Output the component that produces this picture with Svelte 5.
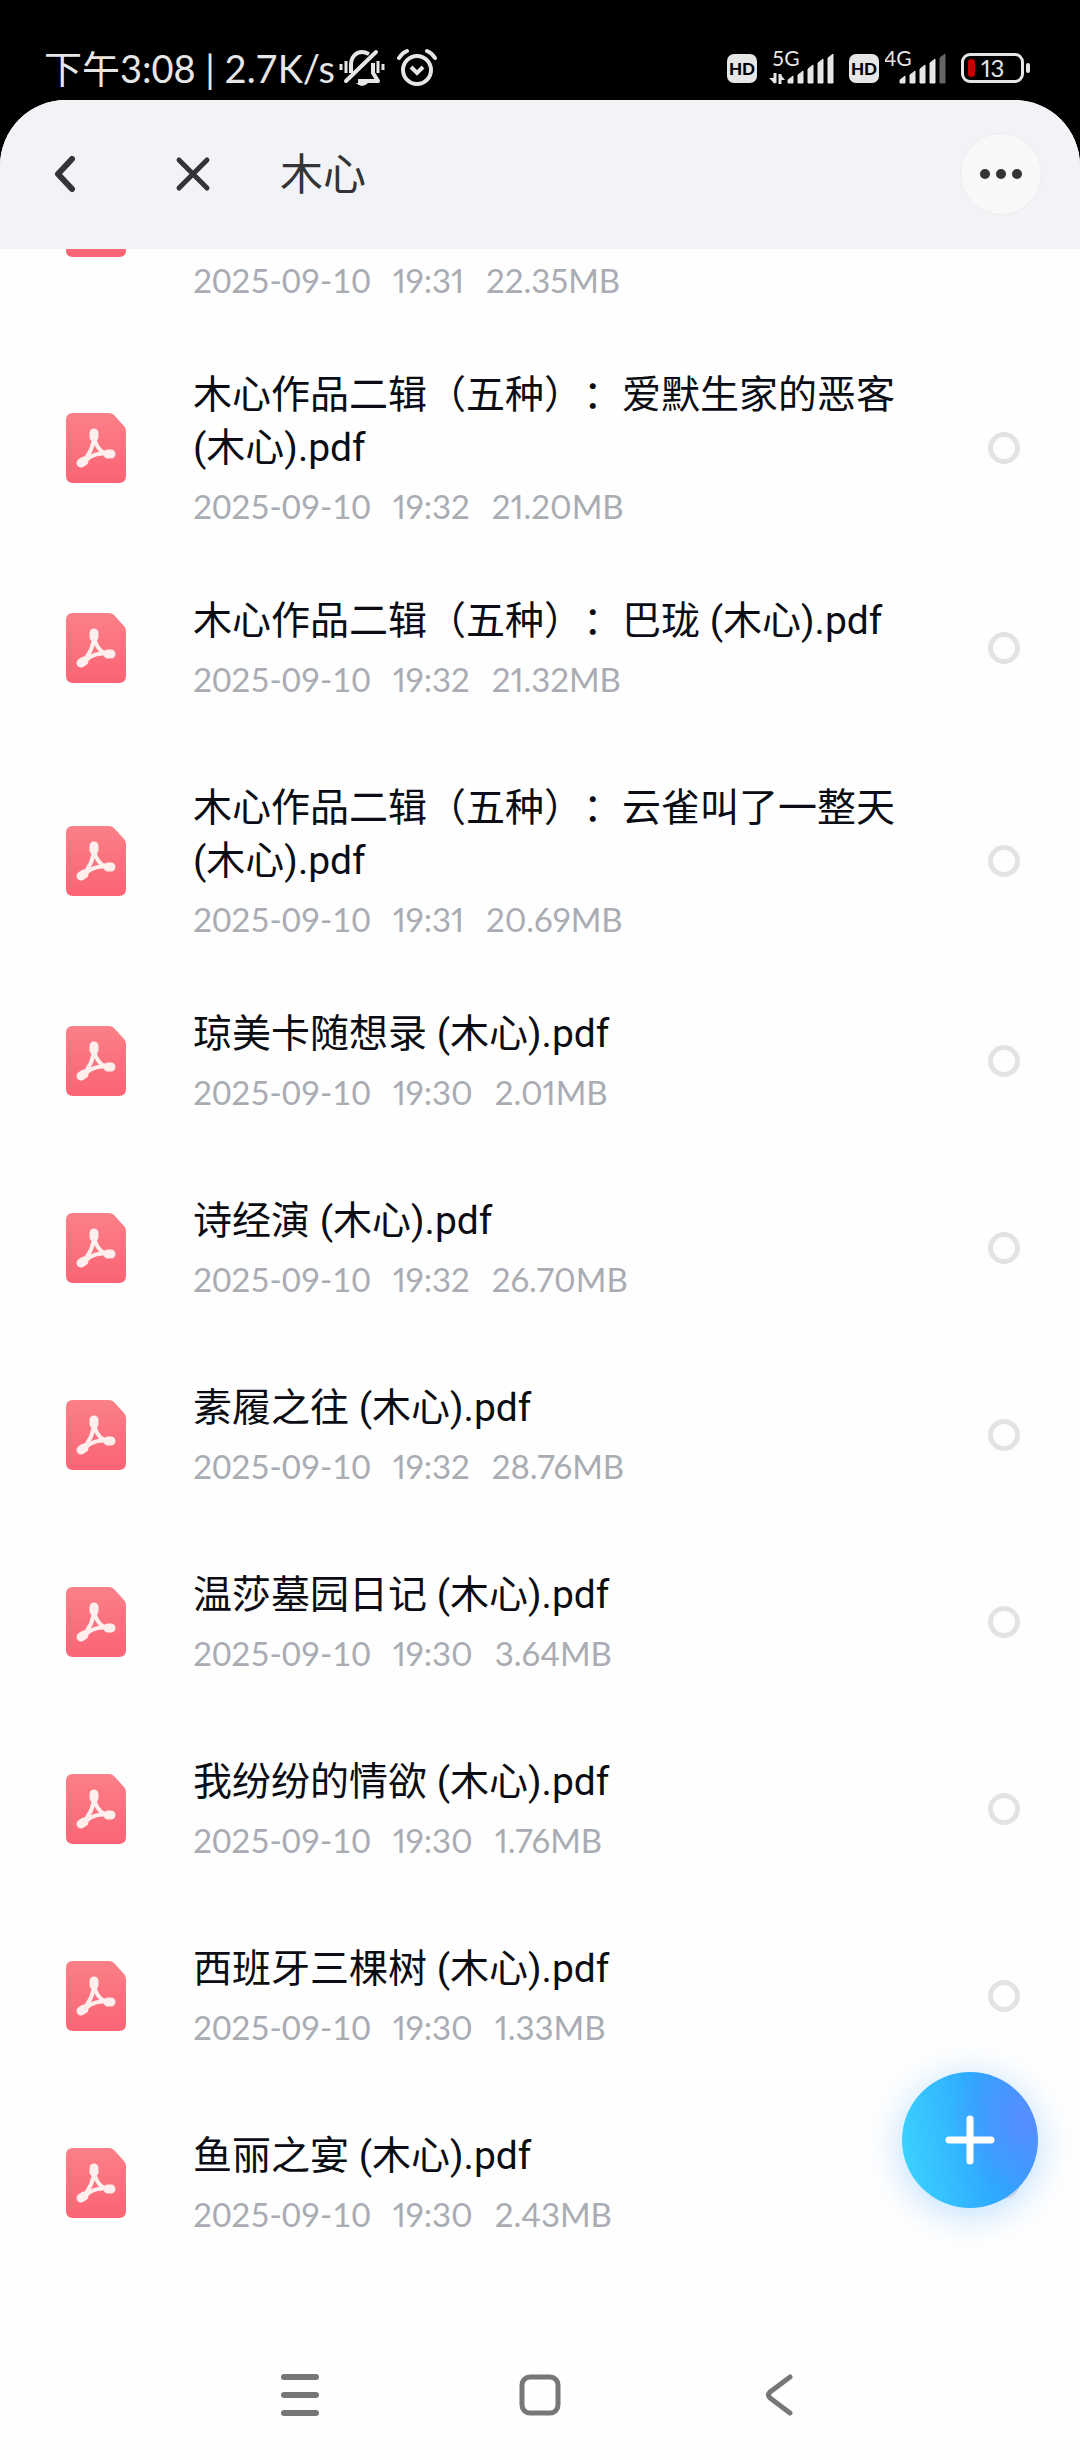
<script>
  /**
   * Files of the open folder. The first one is scrolled halfway under the
   * header, so only its meta line is left on screen.
   */
  const files = $state([
    { name: '', date: '2025-09-10', time: '19:31', size: '22.35MB', checked: false },
    { name: '木心作品二辑（五种）：爱默生家的恶客 (木心).pdf', date: '2025-09-10', time: '19:32', size: '21.20MB', checked: false },
    { name: '木心作品二辑（五种）：巴珑 (木心).pdf', date: '2025-09-10', time: '19:32', size: '21.32MB', checked: false },
    { name: '木心作品二辑（五种）：云雀叫了一整天 (木心).pdf', date: '2025-09-10', time: '19:31', size: '20.69MB', checked: false },
    { name: '琼美卡随想录 (木心).pdf', date: '2025-09-10', time: '19:30', size: '2.01MB', checked: false },
    { name: '诗经演 (木心).pdf', date: '2025-09-10', time: '19:32', size: '26.70MB', checked: false },
    { name: '素履之往 (木心).pdf', date: '2025-09-10', time: '19:32', size: '28.76MB', checked: false },
    { name: '温莎墓园日记 (木心).pdf', date: '2025-09-10', time: '19:30', size: '3.64MB', checked: false },
    { name: '我纷纷的情欲 (木心).pdf', date: '2025-09-10', time: '19:30', size: '1.76MB', checked: false },
    { name: '西班牙三棵树 (木心).pdf', date: '2025-09-10', time: '19:30', size: '1.33MB', checked: false },
    { name: '鱼丽之宴 (木心).pdf', date: '2025-09-10', time: '19:30', size: '2.43MB', checked: false }
  ]);
</script>

<!-- level: number of lit bars out of five -->
{#snippet sim(label, level, arrows)}
  <span class="sim">
    <span class="hd">HD</span>
    <svg
      width={arrows ? 74 : 64}
      height="48"
      viewBox={arrows ? '-4 -6 74 48' : '6 -6 64 48'}
      aria-hidden="true"
    >
      <text x="5" y="16" font-size="21" fill="#e6e6e6">{label}</text>
      {#if arrows}
        <path d="M8 23v10M13 34V24" fill="none" stroke="#e6e6e6" stroke-width="3" />
        <path d="M2 28h6v6zM13 24v6h5z" fill="#e6e6e6" />
      {/if}
      {#each [7, 12, 18, 24, 29] as height, i}
        <path
          d={`M${21 + i * 10} 33v${-(height - 4)}l5 -4v${height}z`}
          fill={i < level ? '#e6e6e6' : '#666'}
          stroke={i < level ? '#e6e6e6' : '#666'}
          stroke-linejoin="round"
        />
      {/each}
    </svg>
  </span>
{/snippet}

{#snippet pdfIcon()}
  <svg class="pdf-icon" width="60" height="70" viewBox="0 0 60 70" aria-hidden="true">
    <defs>
      <linearGradient id="pdf-fill" x1="0" y1="0" x2="0" y2="1">
        <stop offset="0" stop-color="#fa8088" />
        <stop offset="1" stop-color="#fb6475" />
      </linearGradient>
    </defs>
    <path d="M7 0h36q3 0 5 2l10 11q2 2 2 5v45q0 7-7 7H7q-7 0-7-7V7q0-7 7-7z" fill="url(#pdf-fill)" />
    <g fill="none" stroke="#feeeec" stroke-linecap="round" stroke-linejoin="round">
      <path d="M28 21c0 8 3 13 7 17c3 2 5 3 9 3c-8-1-14 0-18 2c-4 2-7 5-11 7c7-6 13-16 13-29z" stroke-width="4" />
      <path d="M28 20v4M45 41h-3M15 50l3-2" stroke-width="9" />
    </g>
  </svg>
{/snippet}

<div class="phone">
  <div class="status-bar">
    <div class="status-left">
      <span class="clock">下午3:08 | 2.7K/s</span>
      <svg width="46" height="40" viewBox="0 0 46 40" fill="none" stroke="#e6e6e6" stroke-width="4" aria-label="静音">
        <path d="M12 25V17C12 9 17 4 23 4c3 0 5 1 7 2M34 15v10l5 8H19" stroke-linejoin="round" />
        <path d="M7 33L37 4" stroke-linecap="round" />
        <path d="M2 16v6M7 13v12M39 13v12M44 16v6" stroke-width="3" />
        <path d="M17 35h12q-6 6-12 0z" fill="#e6e6e6" stroke="none" />
      </svg>
      <svg class="alarm" width="40" height="40" viewBox="0 0 40 40" fill="none" stroke="#e6e6e6" stroke-width="4" aria-label="闹钟">
        <circle cx="20" cy="22" r="14" />
        <path d="M14 19l6 6 6-6" />
        <path d="M2 10q3-5 8-7M38 10q-3-5-8-7" stroke-linecap="round" />
      </svg>
    </div>
    <div class="status-right">
      {@render sim('5G', 5, true)}
      {@render sim('4G', 4, false)}
      <span class="battery">
        <span class="battery-level"></span>
        <span class="battery-text">13</span>
      </span>
    </div>
  </div>

  <div class="sheet">
    <header class="header">
      <button class="icon-button" aria-label="返回">
        <svg width="26" height="40" viewBox="0 0 26 40" fill="none" stroke="#333436" stroke-width="6" stroke-linecap="round" stroke-linejoin="round">
          <path d="M20 5L6 20L20 35" />
        </svg>
      </button>
      <button class="icon-button close" aria-label="关闭">
        <svg width="36" height="36" viewBox="0 0 36 36" fill="none" stroke="#333436" stroke-width="5" stroke-linecap="round">
          <path d="M4 4l28 28M32 4L4 32" />
        </svg>
      </button>
      <h1>木心</h1>
      <button class="icon-button more" aria-label="更多">
        <svg width="44" height="12" viewBox="0 0 44 12" fill="#333436">
          <circle cx="6" cy="6" r="5" />
          <circle cx="22" cy="6" r="5" />
          <circle cx="38" cy="6" r="5" />
        </svg>
      </button>
    </header>

    <ul class="file-list">
      {#each files as file}
        <li>
          <label class="file">
            {@render pdfIcon()}
            <span class="info">
              <span class="name">{file.name}</span>
              <span class="meta">
                <span>{file.date}</span>
                <span class="narrow">{file.time}</span>
                <span class="narrow">{file.size}</span>
              </span>
            </span>
            <input type="checkbox" bind:checked={file.checked} />
          </label>
        </li>
      {/each}
    </ul>

    <nav class="system-nav">
      <button class="icon-button" aria-label="最近任务">
        <svg width="44" height="44" viewBox="0 0 44 44" fill="none" stroke="#777" stroke-width="6" stroke-linecap="round">
          <path d="M6 4h32M6 22h32M6 40h32" />
        </svg>
      </button>
      <button class="icon-button" aria-label="主屏幕">
        <svg width="44" height="44" viewBox="0 0 44 44" fill="none" stroke="#777" stroke-width="5">
          <rect x="4" y="4" width="36" height="36" rx="8" />
        </svg>
      </button>
      <button class="icon-button" aria-label="返回上一级">
        <svg width="44" height="44" viewBox="0 0 44 44" fill="none" stroke="#777" stroke-width="5" stroke-linecap="round" stroke-linejoin="round">
          <path d="M32 4L12 19q-3 3 0 6l20 15" />
        </svg>
      </button>
    </nav>
  </div>

  <button class="fab" aria-label="新建">
    <svg width="52" height="52" viewBox="0 0 52 52" fill="none" stroke="#fff" stroke-width="7" stroke-linecap="round">
      <path d="M26 5v42M5 26h42" />
    </svg>
  </button>
</div>

<style>
  :global(body) {
    background: #000;
  }

  .phone {
    display: flex;
    flex-direction: column;
    min-height: 100vh;
    font-family: Lato, 'Noto Sans CJK SC', sans-serif;
    text-spacing-trim: space-all;
  }

  .icon-button {
    display: flex;
    align-items: center;
    justify-content: center;
    padding: 0;
    border: 0;
    background: none;
  }

  /* Status bar */
  .status-bar {
    display: flex;
    align-items: center;
    justify-content: space-between;
    height: 100px;
    padding: 36px 56px 0 44px;
    box-sizing: border-box;
    color: #e6e6e6;
  }

  .status-left,
  .status-right,
  .sim {
    display: flex;
    align-items: center;
  }

  .status-left {
    gap: 4px;
  }

  .status-right {
    gap: 12px;
  }

  .sim {
    gap: 6px;
  }

  .clock {
    font-size: 38px;
    line-height: 44px;
    white-space: nowrap;
  }

  .alarm {
    margin-left: 8px;
  }

  .hd {
    width: 30px;
    border-radius: 7px;
    background: #e6e6e6;
    color: #000;
    font-size: 17px;
    font-weight: 900;
    line-height: 29px;
    text-align: center;
  }

  .battery {
    position: relative;
    display: flex;
    align-items: center;
    gap: 6px;
    width: 63px;
    height: 30px;
    padding-left: 4px;
    border: 3px solid #e6e6e6;
    border-radius: 9px;
    box-sizing: border-box;
    font-size: 24px;
    line-height: 24px;
    font-variant-numeric: proportional-nums;
  }

  .battery::after {
    content: '';
    position: absolute;
    top: 7px;
    right: -9px;
    width: 4px;
    height: 10px;
    border-radius: 2px;
    background: #e6e6e6;
  }

  .battery-level {
    width: 7px;
    height: 18px;
    border-radius: 3px;
    background: #c80000;
  }

  /* App sheet */
  .sheet {
    display: flex;
    flex: 1;
    flex-direction: column;
    overflow: hidden;
    border-radius: 66px 66px 0 0;
    background: #fefefe;
  }

  .header {
    position: relative;
    z-index: 1;
    display: flex;
    align-items: center;
    height: 149px;
    padding: 0 38px 2px 52px;
    box-sizing: border-box;
    background: #f1f3f7;
  }

  .close {
    margin: 0 69px 0 97px;
  }

  h1 {
    flex: 1;
    margin: 0;
    color: #333436;
    font-size: 43px;
    font-weight: 400;
    line-height: 52px;
  }

  .more {
    width: 82px;
    height: 82px;
    border: 1px solid #ececec;
    border-radius: 50%;
    background: #f7f8f8;
  }

  /* File list */
  .file-list {
    flex: 1;
    margin: -106px 0 0;
    padding: 0;
    list-style: none;
  }

  li {
    min-height: 187px;
    padding: 0 60px 68px 66px;
    box-sizing: border-box;
  }

  .file {
    display: flex;
    align-items: center;
    gap: 67px;
  }

  .pdf-icon {
    flex-shrink: 0;
  }

  .info {
    display: flex;
    flex: 1;
    flex-direction: column;
    gap: 10px;
  }

  .name {
    color: #0b0d14;
    font-family: Roboto, 'Noto Sans CJK SC', sans-serif;
    font-size: 39px;
    line-height: 53px;
  }

  .name:empty {
    min-height: 106px;
  }

  .meta {
    display: flex;
    gap: 22px;
    color: #a9acb3;
    font-size: 33px;
    line-height: 42px;
  }

  .narrow {
    font-variant-numeric: proportional-nums;
  }

  input {
    flex-shrink: 0;
    width: 32px;
    height: 32px;
    margin: 0;
    border: 5px solid #e3e3e4;
    border-radius: 50%;
    appearance: none;
  }

  input:checked {
    border-color: #2f9bff;
  }

  /* System navigation */
  .system-nav {
    display: grid;
    grid-template-columns: repeat(3, 1fr);
    height: 130px;
    padding: 0 calc(100% / 6);
  }

  /* Floating add button */
  .fab {
    position: fixed;
    right: 42px;
    bottom: 252px;
    display: flex;
    align-items: center;
    justify-content: center;
    width: 136px;
    height: 136px;
    padding: 0;
    border: 0;
    border-radius: 50%;
    background:
      radial-gradient(circle at 90% 35%, rgba(92, 138, 255, 0.8), transparent 50%),
      linear-gradient(80deg, #3bd2ff 5%, #2ea8ff 60%, #4098ff 95%);
    box-shadow: 0 6px 36px rgba(60, 160, 255, 0.35);
  }
</style>
